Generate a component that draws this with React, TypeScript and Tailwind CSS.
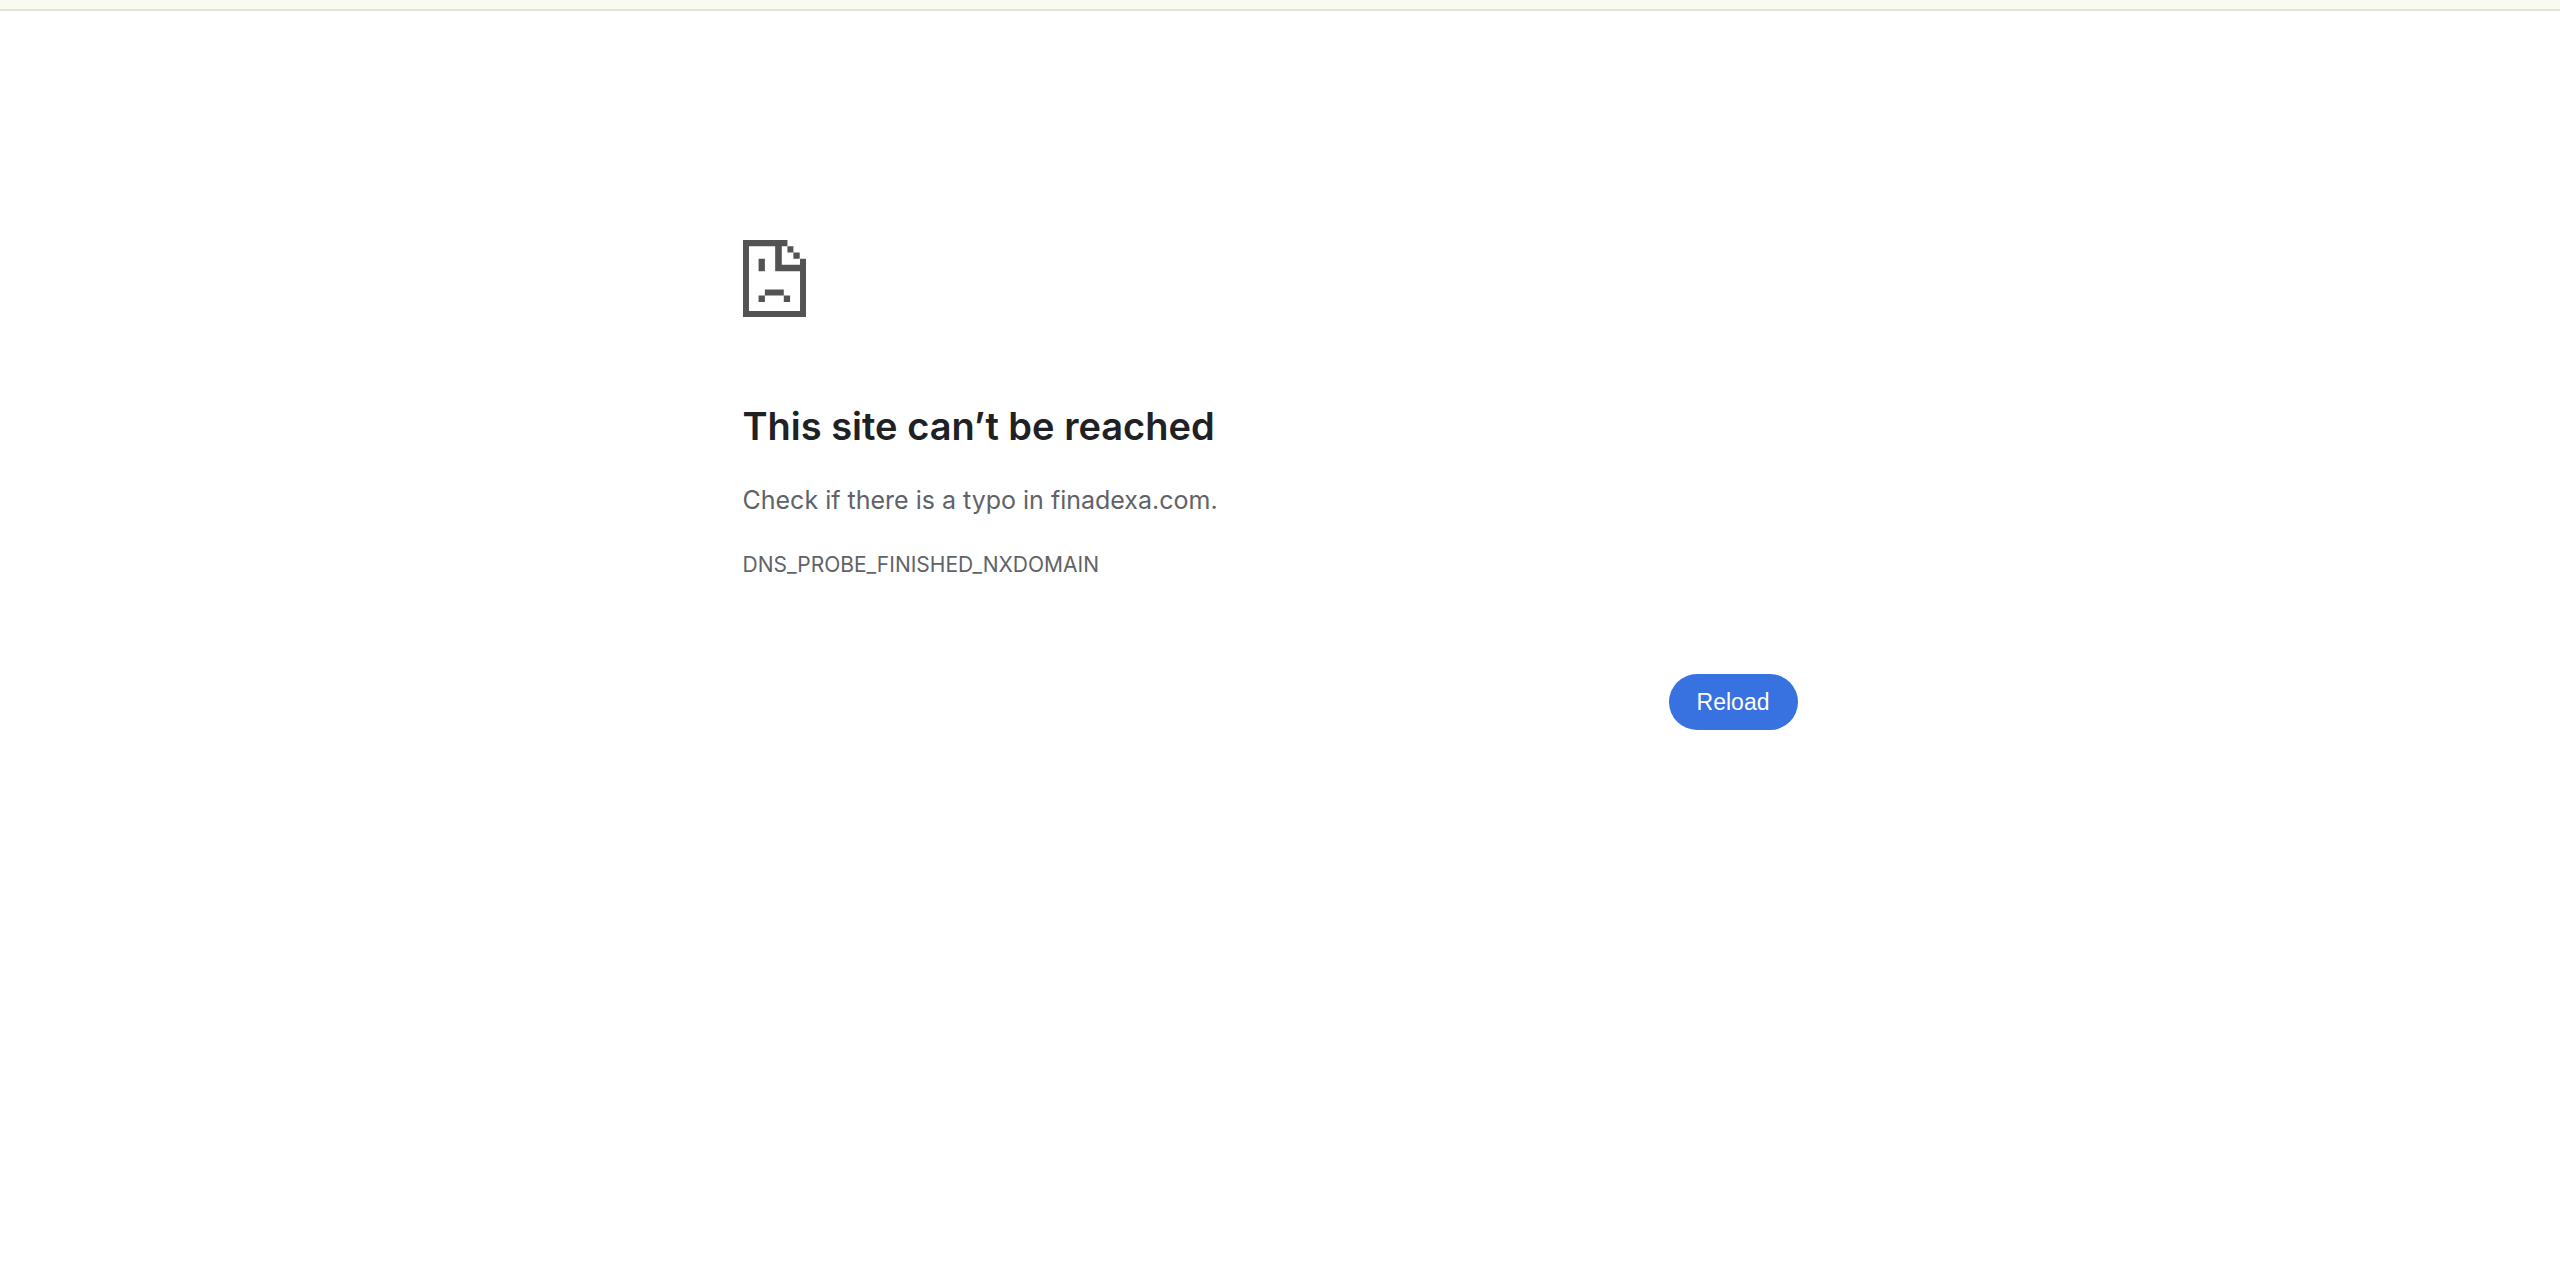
export default function App() {
  return (
    <div className="min-h-screen bg-white font-[Inter,sans-serif] text-[#5f6368]">
      <div className="h-[11px] border-b-2 border-[#e3e5d8] bg-[#f9faf0]" />
      <main className="mx-auto max-w-[1075px] pt-[229px] pr-5">
        <svg className="h-[77px] w-[63px]" viewBox="0 0 190 230" preserveAspectRatio="none" fill="#535353" aria-hidden="true">
          <path d="M0 0H134V19H117V74H172V56H190V230H0ZM18 19V212H172V93H97V19Z" fillRule="evenodd" />
          <path d="M134 19h18v18h-18zM152 37h19v19h-19zM47 56h19v37h-19zM66 148h57v18h-57zM47 166h19v19h-19zM123 166h19v19h-19z" />
        </svg>
        <h1 className="mt-[84px] text-[38px] leading-[50px] font-semibold text-[#202124]">This site can’t be reached</h1>
        <p className="mt-7 text-[25px] leading-[42px]">Check if there is a typo in finadexa.com.</p>
        <p className="mt-[26px] text-[21px] leading-[36px]">DNS_PROBE_FINISHED_NXDOMAIN</p>
        <div className="mt-[91px] flex justify-end">
          <button type="button" className="h-14 rounded-full bg-[#3871e0] px-7 font-['Liberation_Sans',sans-serif] text-[23px] text-white">
            Reload
          </button>
        </div>
      </main>
    </div>
  );
}
